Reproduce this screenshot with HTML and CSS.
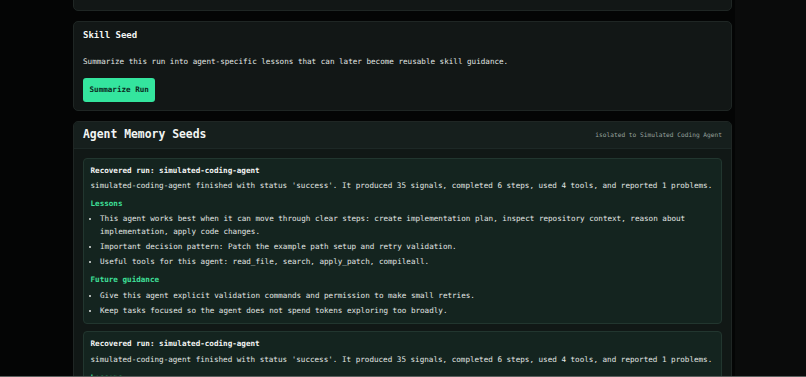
FILE: index.html
```html
<!DOCTYPE html>
<html lang="en">
<head>
<meta charset="utf-8">
<title>Agent Memory Seeds</title>
<link rel="stylesheet" href="styles.css">
</head>
<body>
<div class="layout">
  <main class="main">
    <section class="card card-top"></section>

    <section class="card skill">
      <h3 class="skill-title">Skill Seed</h3>
      <p class="skill-desc">Summarize this run into agent-specific lessons that can later become reusable skill guidance.</p>
      <button class="btn">Summarize Run</button>
    </section>

    <section class="card memory">
      <header class="memory-head">
        <h2 class="memory-title">Agent Memory Seeds</h2>
        <span class="memory-scope">isolated to Simulated Coding Agent</span>
      </header>
      <div class="memory-body">
        <article class="seed">
          <div class="seed-title">Recovered run: simulated-coding-agent</div>
          <p class="seed-summary">simulated-coding-agent finished with status 'success'. It produced 35 signals, completed 6 steps, used 4 tools, and reported 1 problems.</p>
          <div class="seed-head">Lessons</div>
          <ul class="seed-list">
            <li>This agent works best when it can move through clear steps: create implementation plan, inspect repository context, reason about implementation, apply code changes.</li>
            <li>Important decision pattern: Patch the example path setup and retry validation.</li>
            <li>Useful tools for this agent: read_file, search, apply_patch, compileall.</li>
          </ul>
          <div class="seed-head">Future guidance</div>
          <ul class="seed-list">
            <li>Give this agent explicit validation commands and permission to make small retries.</li>
            <li>Keep tasks focused so the agent does not spend tokens exploring too broadly.</li>
          </ul>
        </article>
        <article class="seed">
          <div class="seed-title">Recovered run: simulated-coding-agent</div>
          <p class="seed-summary">simulated-coding-agent finished with status 'success'. It produced 35 signals, completed 6 steps, used 4 tools, and reported 1 problems.</p>
          <div class="seed-head">Lessons</div>
          <ul class="seed-list">
            <li>This agent works best when it can move through clear steps: create implementation plan, inspect repository context, reason about implementation, apply code changes.</li>
          </ul>
        </article>
      </div>
    </section>
  </main>
  <aside class="side"></aside>
</div>
<div class="bottom-line"></div>
</body>
</html>
```

FILE: styles.css
```css
* { box-sizing: border-box; }
html, body { margin: 0; height: 100%; }
body {
  background: #0a0b0b;
  font-family: "DejaVu Sans Mono", "Liberation Mono", monospace;
  color: #e2e6e4;
  overflow: hidden;
}
.layout {
  display: grid;
  grid-template-columns: 735px 1fr;
  min-height: 100vh;
}
.main {
  background: #040505;
  padding: 0 3px 0 73px;
  display: flex;
  flex-direction: column;
  gap: 10px;
}
.side { background: #0a0b0b; }

.card {
  background: #121716;
  border: 1px solid #1f2624;
  border-radius: 5px;
}
.card-top { height: 40px; margin-top: -29px; flex: none; }

.skill { padding: 8px 9px; }
.skill-title {
  margin: 0;
  font-size: 9px;
  line-height: 10.6px;
  font-weight: bold;
  color: #f2f5f3;
}
.skill-desc {
  margin: 14px 0 10px;
  font-size: 7.6px;
  line-height: 13px;
  color: #e0e5e2;
}
.btn {
  display: block;
  height: 24px;
  padding: 0 6.5px;
  border: none;
  border-radius: 3px;
  background: #34e59e;
  color: #0b2a1e;
  font-family: "DejaVu Sans Mono", monospace;
  font-size: 7.6px;
  font-weight: bold;
}

.memory { background: #111816; overflow: hidden; }
.memory-head {
  display: flex;
  justify-content: space-between;
  align-items: center;
  padding: 6.5px 9px;
  background: #161f1d;
  border-bottom: 1px solid #1d2826;
}
.memory-title {
  margin: 0;
  font-size: 11.4px;
  line-height: 13.6px;
  font-weight: bold;
  color: #f2f5f3;
}
.memory-scope {
  font-size: 6.2px;
  color: #97a19d;
}
.memory-body {
  padding: 8.5px 9px;
  display: flex;
  flex-direction: column;
  gap: 7.5px;
}
.seed {
  background: #14241f;
  border: 1px solid #22362f;
  border-radius: 4px;
  padding: 5px 6.5px 6px;
  font-size: 7.6px;
  line-height: 13px;
}
.seed-title { font-weight: bold; color: #f4f6f5; }
.seed-summary { margin: 2.5px 0 0; color: #e2e6e4; }
.seed-head {
  margin-top: 5px;
  font-weight: bold;
  color: #3fe09a;
}
.seed-list {
  margin: 2.2px 0 0;
  padding-left: 9.5px;
  color: #e2e6e4;
}
.seed-list li + li { margin-top: 2px; }

.bottom-line {
  position: fixed;
  left: 0;
  right: 0;
  bottom: 0;
  height: 1px;
  background: #5c605e;
}
```
